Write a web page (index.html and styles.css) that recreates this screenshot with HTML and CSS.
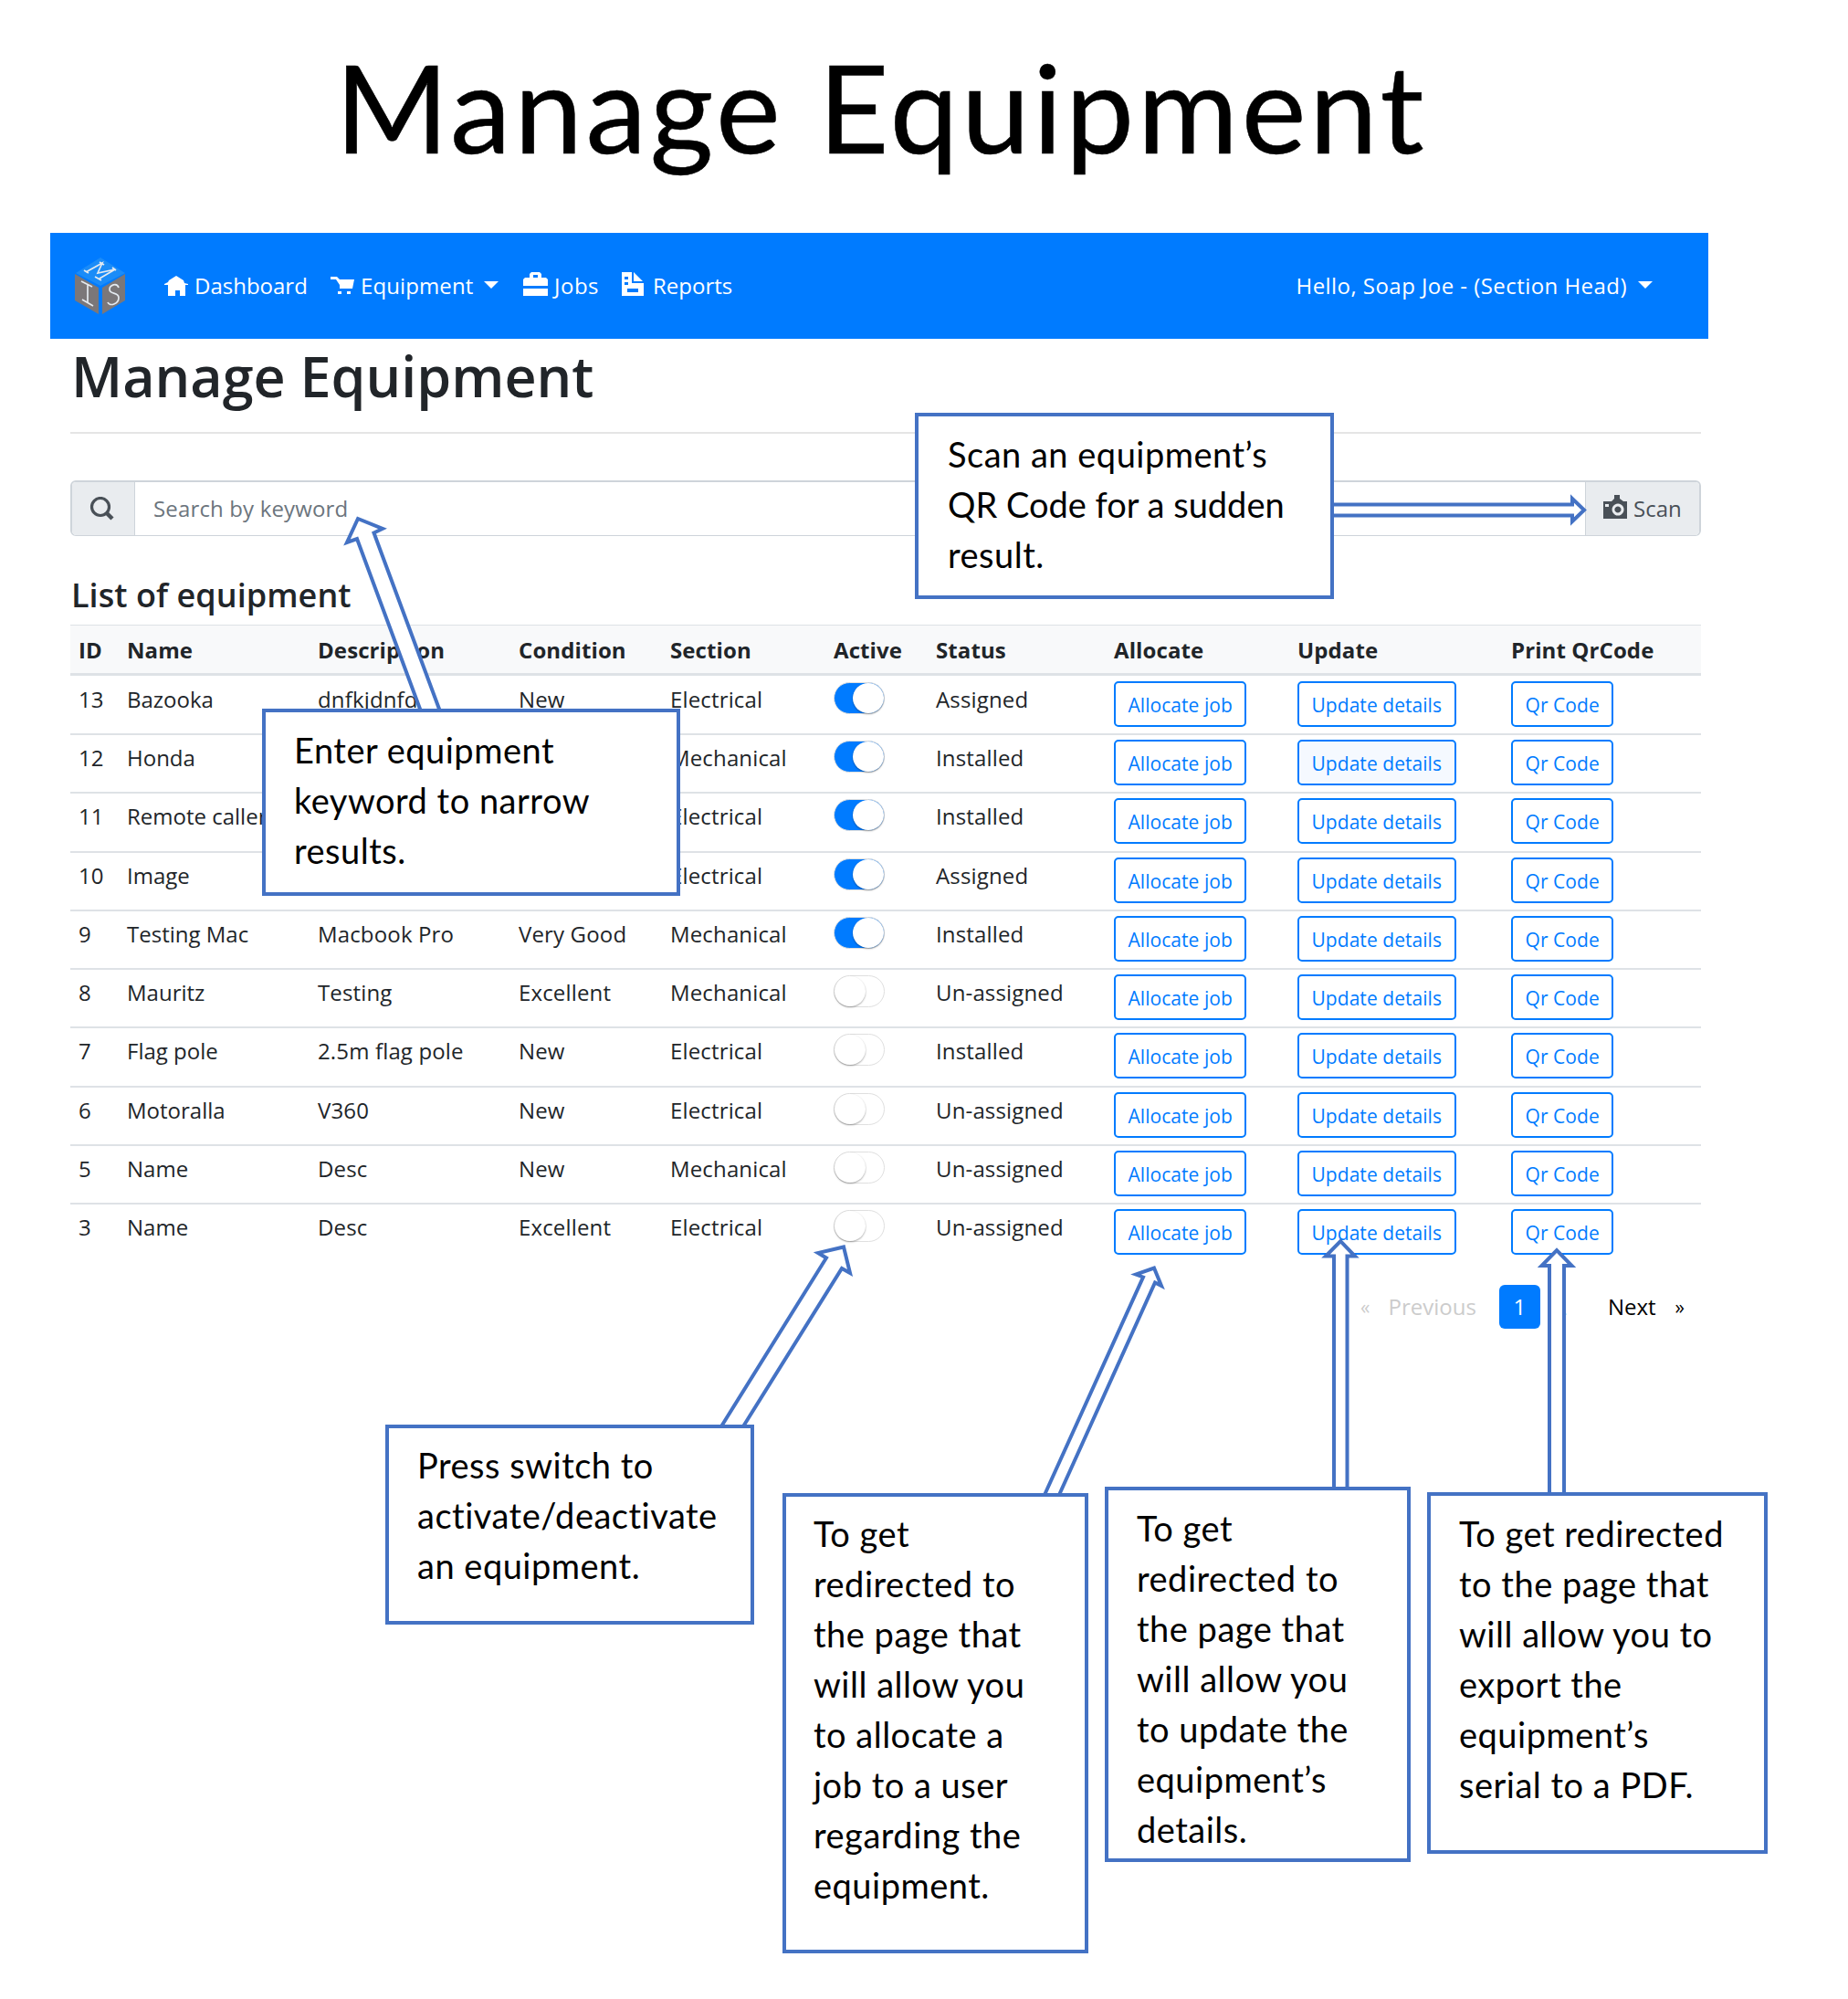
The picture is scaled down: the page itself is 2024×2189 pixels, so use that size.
FILE: index.html
```html
<!DOCTYPE html>
<html lang="en">
<head>
<meta charset="utf-8">
<title>Manage Equipment</title>
<link rel="stylesheet" href="styles.css">
</head>
<body>
<h1 class="doc-title">Manage Equipment</h1>
<main class="app">
  <nav class="navbar">
    <svg class="logo" viewBox="0 0 56 62">
      <path fill="#1b8cf8" d="M28 0 55 17 28 31 1 17z"/>
      <path fill="#7b7779" d="M0 18 26 33V62L0 47z"/>
      <path fill="#7b7779" d="M55 18 30 33V62L55 47z"/>
      <g fill="none" stroke="#e4eaf0" stroke-width="1.7">
        <path d="M10 14l5 3M12 16 30 6l-5 11 19-4-17 10M27 5l5 3M41 11l4 3M22 21l7 4"/>
        <path d="M7 26l12 6M14 29v21M8 46l12 7"/>
        <path d="M48 33c-2-6-10-3-10 2 0 6 10 2 10 9 0 7-10 10-12 5"/>
      </g>
    </svg>
    <a class="nav-link dashboard"><svg class="home" viewBox="0 0 26 22"><path fill="#fff" d="M13 0l8 5 1 3 4 1v1h-3v12h-6v-6h-5v6H4V10H0V9l4-2 1-2z"/></svg>Dashboard</a>
    <a class="nav-link equipment"><svg class="cart" viewBox="0 0 26 20"><path fill="#fff" d="M0 0h7l3 3h16l-2 10H10V9L6 3H0zM8 16h4v3H8zM18 16h4v3h-4z"/></svg>Equipment<i class="caret"></i></a>
    <a class="nav-link jobs"><svg class="case" viewBox="0 0 27 26"><path fill="#fff" fill-rule="evenodd" d="M7 6V2l2-2h9l2 2v4h5l2 2v7H0V8l2-2zM11 3v3h5V3zM0 18h27v8H0z"/></svg>Jobs</a>
    <a class="nav-link reports"><svg class="file" viewBox="0 0 24 26"><path fill="#fff" fill-rule="evenodd" d="M0 0h11v12h13v14H0zM13 0l10 10H13zM3 5v3h4V5zM3 11v3h4v-3zM6 18v4h12v-4z"/></svg>Reports</a>
    <a class="nav-link user">Hello, Soap Joe - (Section Head)<i class="caret"></i></a>
  </nav>
  <section class="content">
    <h2 class="heading">Manage Equipment</h2>
    <div class="search">
      <span class="addon find"><svg viewBox="0 0 27 26"><g fill="none" stroke="#495057"><ellipse cx="12" cy="11" rx="9.500" ry="9.500" stroke-width="3.200"/><path d="M18 17l7 7" stroke-width="4.500"/></g></svg></span>
      <span class="field">Search by keyword</span>
      <span class="addon scan"><svg viewBox="0 0 26 26"><path fill="#495057" fill-rule="evenodd" d="M0 7h9l3-3V0h6v4l4 3h4v19H0zM2 10v3h4v-3zM16 9.500a6.500 6.500 0 1 0 .1 0zM16 12.500a3.500 3.500 0 1 1-.1 0z"/></svg>Scan</span>
    </div>
    <h3 class="list-title">List of equipment</h3>
    <table class="list">
      <colgroup><col class="c1"><col class="c2"><col class="c3"><col class="c4"><col class="c5"><col class="c6"><col class="c7"><col class="c8"><col class="c9"><col></colgroup>
      <thead><tr><th>ID</th><th>Name</th><th>Description</th><th>Condition</th><th>Section</th><th>Active</th><th>Status</th><th>Allocate</th><th>Update</th><th>Print QrCode</th></tr></thead>
      <tbody>
        <tr><td>13</td><td>Bazooka</td><td>dnfkjdnfdkl</td><td>New</td><td>Electrical</td><td><i class="switch on"></i></td><td>Assigned</td><td><a class="btn">Allocate job</a></td><td><a class="btn">Update details</a></td><td><a class="btn">Qr Code</a></td></tr>
        <tr><td>12</td><td>Honda</td><td></td><td></td><td>Mechanical</td><td><i class="switch on"></i></td><td>Installed</td><td><a class="btn">Allocate job</a></td><td><a class="btn focus">Update details</a></td><td><a class="btn">Qr Code</a></td></tr>
        <tr><td>11</td><td>Remote caller</td><td></td><td></td><td>Electrical</td><td><i class="switch on"></i></td><td>Installed</td><td><a class="btn">Allocate job</a></td><td><a class="btn">Update details</a></td><td><a class="btn">Qr Code</a></td></tr>
        <tr><td>10</td><td>Image</td><td></td><td></td><td>Electrical</td><td><i class="switch on"></i></td><td>Assigned</td><td><a class="btn">Allocate job</a></td><td><a class="btn">Update details</a></td><td><a class="btn">Qr Code</a></td></tr>
        <tr><td>9</td><td>Testing Mac</td><td>Macbook Pro</td><td>Very Good</td><td>Mechanical</td><td><i class="switch on"></i></td><td>Installed</td><td><a class="btn">Allocate job</a></td><td><a class="btn">Update details</a></td><td><a class="btn">Qr Code</a></td></tr>
        <tr><td>8</td><td>Mauritz</td><td>Testing</td><td>Excellent</td><td>Mechanical</td><td><i class="switch"></i></td><td>Un-assigned</td><td><a class="btn">Allocate job</a></td><td><a class="btn">Update details</a></td><td><a class="btn">Qr Code</a></td></tr>
        <tr><td>7</td><td>Flag pole</td><td>2.5m flag pole</td><td>New</td><td>Electrical</td><td><i class="switch"></i></td><td>Installed</td><td><a class="btn">Allocate job</a></td><td><a class="btn">Update details</a></td><td><a class="btn">Qr Code</a></td></tr>
        <tr><td>6</td><td>Motoralla</td><td>V360</td><td>New</td><td>Electrical</td><td><i class="switch"></i></td><td>Un-assigned</td><td><a class="btn">Allocate job</a></td><td><a class="btn">Update details</a></td><td><a class="btn">Qr Code</a></td></tr>
        <tr><td>5</td><td>Name</td><td>Desc</td><td>New</td><td>Mechanical</td><td><i class="switch"></i></td><td>Un-assigned</td><td><a class="btn">Allocate job</a></td><td><a class="btn">Update details</a></td><td><a class="btn">Qr Code</a></td></tr>
        <tr><td>3</td><td>Name</td><td>Desc</td><td>Excellent</td><td>Electrical</td><td><i class="switch"></i></td><td>Un-assigned</td><td><a class="btn">Allocate job</a></td><td><a class="btn">Update details</a></td><td><a class="btn">Qr Code</a></td></tr>
      </tbody>
    </table>
    <div class="pager">
      <span class="off first">«</span><span class="off prev">Previous</span><span class="page current">1</span><span class="page">2</span><span class="next">Next</span><span class="last">»</span>
    </div>
  </section>
</main>
<svg class="arrows" viewBox="0 0 2024 2189">
  <path d="M1460 552.500H1722V546L1735 558.500 1722 571V564.500H1460"/>
  <path d="M461 779 391 590 380 594 392 568 419 579 409.500 583.500 482 779"/>
  <path d="M790 1562 905 1377.500 896 1372 924 1365.500 931 1394 922 1389 814 1562"/>
  <path d="M1144 1637 1252 1398.500 1244 1395.500 1264 1388.500 1272 1408 1265 1404.500 1160 1637"/>
  <path d="M1461 1630V1375.500H1452L1468.200 1359 1484 1375.500H1475.500V1630"/>
  <path d="M1697 1636V1386H1688.500L1705 1369 1721.500 1386H1713V1636"/>
</svg>
<aside class="callout note-scan">Scan an equipment’s<br><span class="tight">QR Code for a sudden</span><br>result.</aside>
<aside class="callout note-search">Enter equipment<br>keyword to narrow<br>results.</aside>
<aside class="callout note-switch">Press switch to<br>activate/deactivate<br>an equipment.</aside>
<aside class="callout note-allocate">To get<br>redirected to<br>the page that<br>will allow you<br>to allocate a<br>job to a user<br>regarding the<br>equipment.</aside>
<aside class="callout note-update">To get<br>redirected to<br>the page that<br>will allow you<br>to update the<br>equipment’s<br>details.</aside>
<aside class="callout note-print">To get redirected<br>to the page that<br>will allow you to<br>export the<br>equipment’s<br>serial to a PDF.</aside>
</body>
</html>
```
FILE: styles.css
```css
* { box-sizing: border-box; }
body {
  margin: 0;
  position: relative;
  width: 2024px;
  height: 2189px;
  overflow: hidden;
  background: #fff;
  color: #212529;
  font: 24px/36px "Open Sans", "Noto Sans", sans-serif;
}
.doc-title {
  margin: 0;
  padding: 0 0 0 367px;
  height: 255px;
  color: #000;
  font: 400 134px/233px Lato, sans-serif;
  -webkit-text-stroke: .500px #000;
  letter-spacing: 3.600px;
  white-space: nowrap;
}
.app { width: 1816px; margin-left: 55px; }
.navbar {
  display: flex;
  align-items: center;
  height: 116px;
  padding: 0 61px 0 27px;
  background: #007bff;
  color: #fff;
}
.logo { width: 56px; height: 62px; margin-right: 42px; }
.nav-link { display: flex; align-items: center; white-space: nowrap; height: 36px; }
.dashboard { width: 182px; }
.equipment { width: 211px; letter-spacing: .1px; }
.jobs { width: 108px; letter-spacing: .5px; }
.home { width: 26px; height: 22px; margin-right: 7px; }
.cart { width: 26px; height: 20px; margin-right: 7px; }
.case { width: 27px; height: 26px; margin: -4px 7px 0 0; }
.file { width: 24px; height: 26px; margin: -4px 10px 0 0; }
.user { margin-left: auto; letter-spacing: .450px; }
.caret {
  margin: -2px 0 0 12px;
  border: 8px solid transparent;
  border-top: 8px solid #fff;
  border-bottom: 0;
}
.content { padding: 0 8px 0 22px; }
.heading {
  margin: 0 0 51px;
  padding-left: 1px;
  height: 104px;
  border-bottom: 2px solid #e5e5e5;
  font: 600 61px/82px "Open Sans", sans-serif;
  letter-spacing: 0;
}
.search {
  display: flex;
  height: 61px;
  border: 2px solid #ced4da;
  border-bottom-width: 1px;
  border-radius: 6px;
  line-height: 58px;
  overflow: hidden;
}
.addon { display: flex; align-items: center; background: #e9ecef; color: #495057; }
.find { width: 69px; padding-left: 19px; border-right: 1px solid #ced4da; }
.find svg { width: 27px; height: 26px; }
.field { flex: 1; padding-left: 20px; color: #6c757d; letter-spacing: .150px; }
.scan { width: 125px; padding-left: 19px; border-left: 1px solid #ced4da; }
.scan svg { width: 26px; height: 26px; margin: -4px 7px 0 0; }
.list-title {
  margin: 0;
  height: 97px;
  padding: 38px 0 0 1px;
  font: 600 36px/53px "Open Sans", sans-serif;
  letter-spacing: .050px;
}
.list { width: 1786px; table-layout: fixed; border-collapse: separate; border-spacing: 0; }
.c1 { width: 53px; }
.c2 { width: 209px; }
.c3 { width: 220px; }
.c4 { width: 166px; }
.c5 { width: 179px; }
.c6 { width: 112px; }
.c7 { width: 195px; }
.c8 { width: 201px; }
.c9 { width: 234px; }
.list th {
  height: 56px;
  padding: 1px 9px 0;
  text-align: left;
  background: #f8f9fa;
  border-top: 1px solid #dee2e6;
  border-bottom: 3px solid #dee2e6;
  font-weight: 700;
  font-size: 24px;
  letter-spacing: .100px;
  white-space: nowrap;
}
.list td {
  height: 64.250px;
  padding: 7px 9px 0;
  vertical-align: top;
  border-top: 2px solid #dee2e6;
  white-space: nowrap;
  letter-spacing: .150px;
}
.list td:nth-child(2) { letter-spacing: 0; }
.list tbody tr:first-child td { height: 63px; border-top: 0; padding-top: 8px; }
.switch {
  display: block;
  width: 56px;
  height: 35px;
  margin-top: -1px;
  border: 1.500px solid #dfdfdf;
  border-radius: 18px;
  background: #fff;
}
.switch::before {
  content: "";
  display: block;
  width: 34px;
  height: 33px;
  border-radius: 50%;
  background: #fff;
  box-shadow: 0 1px 2px rgba(0, 0, 0, .35);
}
.switch.on { background: #007bff; }
.switch.on::before { margin-left: 20px; }
.btn {
  display: inline-block;
  height: 50px;
  margin-top: -2px;
  padding: 0 13.500px;
  border: 2px solid #007bff;
  border-radius: 5px;
  color: #007bff;
  font-size: 21px;
  line-height: 49px;
  letter-spacing: .050px;
}
.focus { background: #f5f9ff; }
.pager {
  display: flex;
  justify-content: flex-end;
  align-items: center;
  height: 48px;
  margin-top: 26px;
  padding-right: 18px;
  color: #000;
}
.off { color: #ccc; }
.first, .last { font-size: 21px; }
.prev { margin: 0 25px 0 20px; }
.page { width: 45px; height: 48px; line-height: 48px; text-align: center; border-radius: 6px; }
.current { background: #007bff; color: #fff; }
.next { margin: 0 21px 0 29px; }
.arrows { position: absolute; left: 0; top: 0; width: 2024px; height: 2189px; }
.arrows path { fill: #fff; stroke: #4472c4; stroke-width: 4px; stroke-miterlimit: 10; }
.callout {
  position: absolute;
  border: 4px solid #4472c4;
  background: #fff;
  color: #000;
  padding: 14px 0 0 31px;
  font: 38px/55px Lato, sans-serif;
  letter-spacing: .500px;
  font-variant-ligatures: none;
  white-space: nowrap;
}
.tight { letter-spacing: 0; }
.note-scan { left: 1002px; top: 452px; width: 459px; height: 204px; padding-left: 32px; }
.note-search { left: 287px; top: 776px; width: 458px; height: 205px; }
.note-switch { left: 422px; top: 1560px; width: 404px; height: 219px; padding-top: 13px; }
.note-allocate { left: 857px; top: 1635px; width: 335px; height: 504px; padding: 13px 0 0 30px; }
.note-update { left: 1210px; top: 1628px; width: 335px; height: 411px; }
.note-print { left: 1563px; top: 1634px; width: 373px; height: 396px; }
```
